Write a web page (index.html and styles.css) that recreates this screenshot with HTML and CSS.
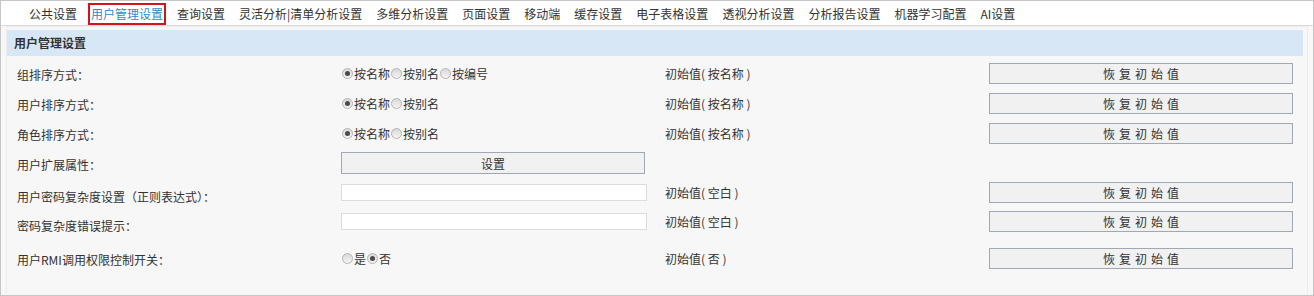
FILE: index.html
```html
<!DOCTYPE html>
<html lang="zh-CN">
<head>
    <meta charset="UTF-8">
    <title>用户管理设置</title>
    <link rel="stylesheet" href="styles.css">
</head>
<body>
<div class="frame">
    <!-- Tabs -->
    <ul class="tabs">
        <li>公共设置</li>
        <li class="active">用户管理设置</li>
        <li>查询设置</li>
        <li>灵活分析|清单分析设置</li>
        <li>多维分析设置</li>
        <li>页面设置</li>
        <li>移动端</li>
        <li>缓存设置</li>
        <li>电子表格设置</li>
        <li>透视分析设置</li>
        <li>分析报告设置</li>
        <li>机器学习配置</li>
        <li>AI设置</li>
    </ul>

    <!-- Panel -->
    <div class="panel">
        <div class="panel-head">用户管理设置</div>
        <div class="form">
            <div class="row first">
                <div class="label">组排序方式：</div>
                <div class="ctrl">
                    <label><input type="radio" name="g" checked>按名称</label><label><input type="radio" name="g">按别名</label><label><input type="radio" name="g">按编号</label>
                </div>
                <div class="init">初始值( 按名称 )</div>
                <div><button class="btn restore">恢复初始值</button></div>
            </div>
            <div class="row">
                <div class="label">用户排序方式：</div>
                <div class="ctrl">
                    <label><input type="radio" name="u" checked>按名称</label><label><input type="radio" name="u">按别名</label>
                </div>
                <div class="init">初始值( 按名称 )</div>
                <div><button class="btn restore">恢复初始值</button></div>
            </div>
            <div class="row">
                <div class="label">角色排序方式：</div>
                <div class="ctrl">
                    <label><input type="radio" name="r" checked>按名称</label><label><input type="radio" name="r">按别名</label>
                </div>
                <div class="init">初始值( 按名称 )</div>
                <div><button class="btn restore">恢复初始值</button></div>
            </div>
            <div class="row">
                <div class="label">用户扩展属性：</div>
                <div class="ctrl"><button class="btn set">设置</button></div>
                <div></div>
                <div></div>
            </div>
            <div class="row short">
                <div class="label low">用户密码复杂度设置（正则表达式）：</div>
                <div class="ctrl"><input class="text" type="text"></div>
                <div class="init">初始值( 空白 )</div>
                <div><button class="btn restore">恢复初始值</button></div>
            </div>
            <div class="row short">
                <div class="label low">密码复杂度错误提示：</div>
                <div class="ctrl"><input class="text" type="text"></div>
                <div class="init">初始值( 空白 )</div>
                <div><button class="btn restore">恢复初始值</button></div>
            </div>
            <div class="row last">
                <div class="label">用户RMI调用权限控制开关：</div>
                <div class="ctrl">
                    <label><input type="radio" name="rmi">是</label><label><input type="radio" name="rmi" checked>否</label>
                </div>
                <div class="init">初始值( 否 )</div>
                <div><button class="btn restore">恢复初始值</button></div>
            </div>
        </div>
    </div>
</div>
</body>
</html>
```

FILE: styles.css
```css
* {
    margin: 0;
    padding: 0;
    box-sizing: border-box;
}

body {
    font-family: "Noto Sans CJK SC", "Noto Sans", sans-serif;
    font-size: 12px;
    color: #333;
    overflow: hidden;
}

.frame {
    height: 296px;
    border: 1px solid #c6c6c6;
    background: #f7f7f7;
}

/* Tabs */
.tabs {
    list-style: none;
    display: flex;
    height: 25px;
    padding-left: 21px;
    background: #fff;
    border-bottom: 1px solid #dadada;
}

.tabs li {
    margin: 2px 4px 0;
    padding: 0 1px;
    height: 22px;
    line-height: 18px;
    border: 2px solid transparent;
    white-space: nowrap;
    color: #333;
}

.tabs li.active {
    border-color: #d3141d;
    color: #2b8ec2;
}

/* Panel */
.panel {
    margin: 0 5px;
    height: 268px;
    padding-top: 3px;
    border: 1px solid #ececec;
    border-bottom: none;
}

.panel-head {
    height: 26px;
    line-height: 26px;
    margin-right: 4px;
    padding-left: 7px;
    background: #d8e7f6;
    font-weight: bold;
    color: #333;
}

.form {
    padding-left: 10px;
}

.row {
    display: grid;
    grid-template-columns: 324px 324px 324px 324px;
    align-items: center;
    height: 30px;
}

.row.first {
    margin-top: 2px;
}

.row.short {
    height: 29px;
}

.row.last {
    margin-top: 7px;
}

.label {
    padding-top: 2px;
    white-space: nowrap;
}

.label.low {
    padding-top: 8px;
}

.ctrl {
    display: flex;
    align-items: center;
}

.ctrl label {
    display: flex;
    align-items: center;
}

.ctrl input[type="radio"] {
    appearance: none;
    -webkit-appearance: none;
    width: 11px;
    height: 11px;
    margin: 0 1px 0 1px;
    border: 1px solid #b4b4b4;
    border-radius: 50%;
    background: linear-gradient(#d9d9d9, #f4f4f4);
    position: relative;
}

.ctrl input[type="radio"]:checked::after {
    content: "";
    position: absolute;
    left: 2px;
    top: 2px;
    width: 5px;
    height: 5px;
    border-radius: 50%;
    background: #4a4a4a;
}

.init {
    white-space: nowrap;
}

.btn {
    width: 304px;
    height: 21px;
    border: 1px solid #a1a8b3;
    background: #f1f1f1;
    font-family: inherit;
    font-size: 12px;
    color: #333;
}

.btn.restore {
    letter-spacing: 4px;
    text-indent: 4px;
}

.btn.set {
    height: 22px;
}

.text {
    width: 306px;
    height: 17px;
    border: 1px solid #dcdcdc;
    background: #fff;
}
```
